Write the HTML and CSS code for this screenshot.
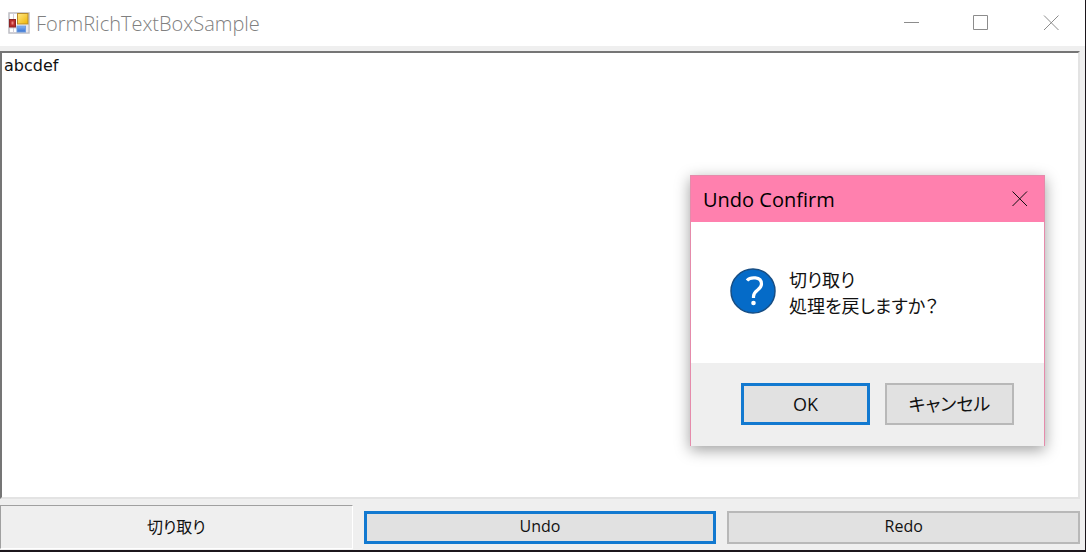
FILE: index.html
```html
<!DOCTYPE html>
<html lang="ja">
<head>
<meta charset="utf-8">
<title>FormRichTextBoxSample</title>
<link rel="stylesheet" href="styles.css">
</head>
<body>
<main class="window">
  <header class="titlebar">
    <svg class="app-icon" width="22" height="22" viewBox="0 0 22 22" aria-hidden="true">
      <defs>
        <linearGradient id="gold" x1="0" y1="0" x2="1" y2="1"><stop offset="0" stop-color="#ffe98a"/><stop offset="1" stop-color="#eeb400"/></linearGradient>
        <linearGradient id="sky" x1="0" y1="0" x2="0" y2="1"><stop offset="0" stop-color="#86b4f5"/><stop offset="1" stop-color="#3672d2"/></linearGradient>
      </defs>
      <rect x="1" y="1" width="20" height="20" fill="#fff" stroke="#bdbdc4" stroke-width="1.5"/>
      <path d="M5.500 1V21M1 16H9M19 13V21" stroke="#d2cfda" fill="none"/>
      <rect x="1.500" y="7.500" width="6" height="7.500" fill="#b92c2c" stroke="#8c2424"/>
      <rect x="3.500" y="9.500" width="2" height="3" fill="#ef8580"/>
      <rect x="9.500" y="1.500" width="10.500" height="10.500" fill="url(#gold)" stroke="#b58a2c"/>
      <rect x="9" y="14" width="8.500" height="6" fill="url(#sky)" stroke="#719ddd"/>
    </svg>
    <h1 class="title">FormRichTextBoxSample</h1>
    <div class="window-controls">
      <button class="control" type="button" aria-label="Minimize"><svg width="16" height="16" viewBox="0 0 16 16"><path d="M1 7.500H16"/></svg></button>
      <button class="control" type="button" aria-label="Maximize"><svg width="16" height="16" viewBox="0 0 16 16"><path d="M.5.500H14.500V14.500H.5Z"/></svg></button>
      <button class="control" type="button" aria-label="Close"><svg width="16" height="16" viewBox="0 0 16 16"><path d="M1 .5L15.500 15M15.500.5L1 15"/></svg></button>
    </div>
  </header>
  <div class="client">
    <textarea class="editor" aria-label="Text" spellcheck="false">abcdef</textarea>
    <div class="actions">
      <button class="last-action" type="button">切り取り</button>
      <button class="button focused" type="button">Undo</button>
      <button class="button" type="button">Redo</button>
    </div>
  </div>
</main>
<section class="dialog" role="dialog" aria-labelledby="dialog-title">
  <header class="dialog-titlebar">
    <h2 class="dialog-title" id="dialog-title">Undo Confirm</h2>
    <button class="dialog-close" type="button" aria-label="Close"><svg width="16" height="16" viewBox="0 0 16 16"><path d="M.5.500L15 15M15 .5L.5 15"/></svg></button>
  </header>
  <div class="dialog-body">
    <svg class="question" width="46" height="46" viewBox="0 0 46 46" aria-hidden="true">
      <circle cx="23" cy="23" r="22" fill="#056bc8" stroke="#174e85" stroke-width="1.500"/>
      <path d="M17 12.500C20 9 31.500 8 31.500 16C31.500 22 23.500 22 23.500 28.500V30" fill="none" stroke="#fff" stroke-width="3.200"/>
      <circle cx="23.500" cy="35" r="2.300" fill="#fff"/>
    </svg>
    <p class="message">切り取り<br>処理を戻しますか？</p>
  </div>
  <footer class="dialog-actions">
    <button class="button focused" type="button">OK</button>
    <button class="button" type="button">キャンセル</button>
  </footer>
</section>
</body>
</html>
```
FILE: styles.css
```css
* { box-sizing: border-box; }

body {
  margin: 0;
  height: 100vh;
  padding: 0 1px 2px 0;
  background: #1c161c;
  font-family: "Open Sans", "Noto Sans CJK JP", sans-serif;
  color: #111;
}

button { font: inherit; color: inherit; }

.window {
  height: 100%;
  display: flex;
  flex-direction: column;
  background: #fff;
}

.titlebar {
  height: 46px;
  flex: none;
  display: flex;
  align-items: center;
  padding: 0 10px 0 8px;
}

.app-icon { margin-right: 6px; }

.title,
.dialog-title {
  margin: 0;
  padding-top: 2px;
  font-size: 20px;
  line-height: 28px;
  font-weight: 400;
}

.title {
  flex: 1;
  font-weight: 300;
  color: #808080;
}

.window-controls { display: flex; }

.control {
  width: 70px;
  height: 46px;
  padding: 0;
  border: 0;
  background: none;
  display: grid;
  place-items: center;
}

.control:last-child { width: 48px; margin-left: 11px; }

.control svg,
.dialog-close svg {
  fill: none;
  stroke: #8c8c8c;
}

.client {
  flex: 1;
  min-height: 0;
  display: flex;
  flex-direction: column;
  gap: 6px;
  padding: 5px 5px 1px 0;
  background: #efefef;
}

.editor {
  flex: 1;
  min-height: 0;
  width: 100%;
  margin: 0;
  padding: 3px 2px;
  border: 2px solid;
  border-color: #757575 #e3e3e3 #e3e3e3 #757575;
  outline: 0;
  resize: none;
  background: #fff;
  color: #111;
  font-family: "DejaVu Sans", sans-serif;
  font-size: 16px;
  line-height: 20px;
}

.actions {
  display: grid;
  grid-template-columns: repeat(3, 1fr);
  column-gap: 11px;
  font-size: 16px;
}

.last-action {
  height: 44px;
  padding: 0 0 2px;
  border: 1px solid;
  border-color: #a0a0a0 #fff #fff #a0a0a0;
  background: #efefef;
  font-feature-settings: "palt";
}

.button {
  height: 33px;
  padding: 0;
  border: 2px solid #b8b8b8;
  background: #e1e1e1;
  line-height: 20px;
}

.button.focused { border: 3px solid #1279d0; }

.actions .button {
  margin-top: 6px;
  padding-bottom: 3px;
}

.dialog {
  position: absolute;
  top: 175px;
  right: 41px;
  width: 355px;
  border: 1px solid #e58bab;
  border-bottom: 0;
  background: #fff;
  box-shadow: 0 4px 14px rgba(0, 0, 0, 0.38);
}

.dialog-titlebar {
  height: 46px;
  display: flex;
  align-items: center;
  justify-content: space-between;
  padding: 0 16px 0 12px;
  background: #ff80ae;
}

.dialog-title { color: #000; }

.dialog-close {
  width: 16px;
  height: 16px;
  padding: 0;
  border: 0;
  background: none;
}

.dialog-close svg { display: block; stroke: #111; }

.dialog-body {
  height: 141px;
  display: flex;
  align-items: center;
  gap: 13px;
  padding: 0 39px 4px;
}

.message {
  margin: 4px 0 0;
  font-size: 18px;
  line-height: 26px;
  font-feature-settings: "palt";
}

.dialog-actions {
  display: flex;
  justify-content: flex-end;
  gap: 15px;
  padding: 20px 30px 21px;
  background: #efefef;
  font-size: 18px;
}

.dialog-actions .button {
  width: 129px;
  height: 42px;
  font-feature-settings: "palt";
}
```
